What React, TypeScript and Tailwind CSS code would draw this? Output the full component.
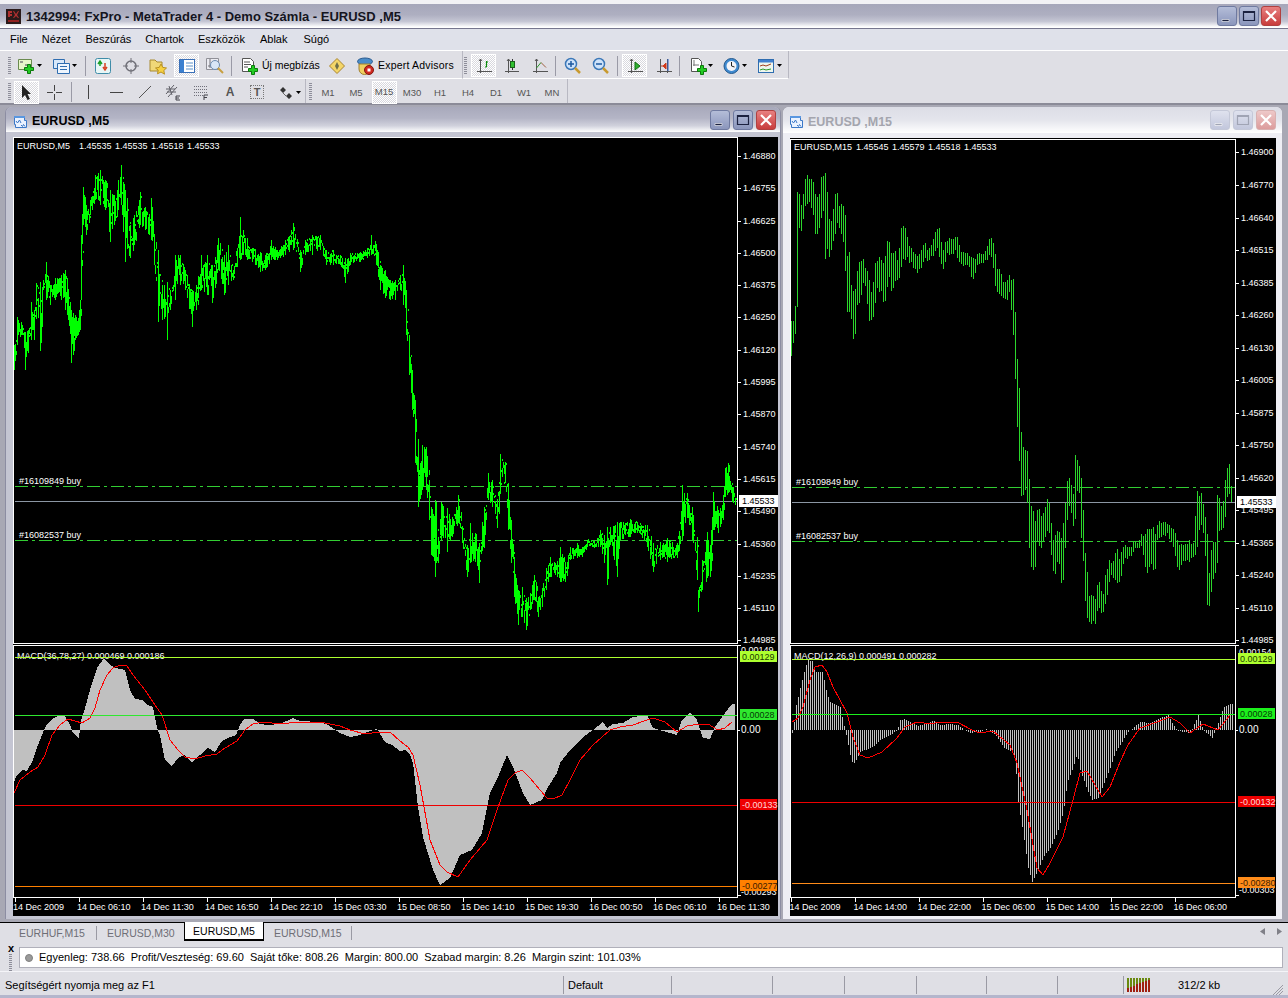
import type { ReactNode } from "react";

// [x, high y, low y] traced off the M5 chart, in page pixels
const ENV: number[][] = [
  [14,345,370],[17,317,345],[22,325,335],[25,332,370],[28,330,345],[31,302,340],[34,310,340],[36,283,305],[40,282,351],[46,262,300],[50,285,305],[55,278,300],[61,275,300],[65,270,310],[68,290,320],[71,310,363],[75,315,340],[78,318,335],[80,300,330],[81,235,300],[83,187,225],[86,205,235],[90,200,215],[95,175,200],[100,170,205],[105,180,210],[110,190,242],[114,195,225],[118,180,210],[121,165,205],[125,190,262],[130,225,258],[134,215,245],[140,192,225],[145,210,230],[151,198,240],[154,235,265],[158,250,322],[162,285,320],[167,282,340],[170,290,310],[175,255,300],[180,255,285],[185,270,290],[192,290,327],[196,285,310],[201,255,290],[207,255,295],[212,265,303],[218,238,270],[224,255,295],[228,245,285],[233,270,280],[240,217,260],[247,240,260],[255,250,265],[260,252,272],[265,255,270],[271,240,260],[277,250,260],[285,240,255],[293,223,250],[300,250,272],[305,240,255],[312,235,255],[320,235,250],[326,250,265],[333,250,265],[340,255,265],[345,258,283],[350,253,265],[360,252,262],[367,248,258],[371,235,255],[376,245,265],[380,265,290],[385,270,298],[390,280,300],[395,280,300],[400,275,290],[403,265,305],[406,290,335],[409,335,375],[412,370,410],[415,400,463],[418,455,507],[422,445,490],[426,447,490],[429,480,520],[431,507,555],[435,500,577],[438,537,563],[441,502,540],[447,508,552],[452,517,537],[458,495,523],[462,528,543],[467,545,577],[470,523,563],[475,533,562],[479,543,583],[484,507,540],[488,473,500],[492,480,507],[497,500,528],[500,454,493],[505,462,483],[508,483,530],[511,533,563],[514,557,597],[518,590,625],[522,587,617],[526,600,630],[530,593,610],[534,575,600],[538,597,617],[542,588,607],[546,568,590],[550,557,577],[555,563,575],[560,547,582],[565,562,582],[570,547,560],[577,543,558],[582,548,557],[587,540,547],[594,542,548],[600,530,547],[607,527,585],[610,527,545],[617,522,577],[620,522,540],[630,519,537],[637,522,533],[647,525,547],[653,543,572],[660,542,560],[667,538,562],[677,543,558],[682,485,540],[687,493,518],[692,508,540],[697,537,580],[698,590,612],[702,560,590],[707,532,578],[710,545,577],[713,492,530],[718,510,533],[723,495,520],[725,468,497],[728,463,493],[732,487,502],[735,498,505],
];

const HIST_L: number[][] = [
  [14,782],[17,775],[22,770],[27,771],[33,760],[38,745],[44,730],[47,724],[52,719],[58,716],[65,716],[70,725],[73,733],[79,738],[81,720],[84,712],[90,690],[97,668],[104,658],[110,665],[116,668],[125,670],[130,690],[135,699],[142,700],[147,705],[153,707],[157,728],[160,735],[165,760],[172,766],[178,758],[184,755],[192,762],[200,755],[208,748],[215,752],[222,741],[228,738],[236,735],[240,725],[244,719],[253,719],[260,724],[267,725],[280,724],[293,718],[300,721],[320,722],[328,725],[340,733],[350,737],[360,735],[373,730],[377,729],[385,742],[392,745],[400,751],[405,750],[410,755],[413,763],[418,807],[423,837],[433,870],[440,885],[450,878],[460,855],[472,850],[482,833],[490,793],[498,777],[507,755],[513,767],[523,793],[530,805],[542,800],[548,787],[557,773],[560,763],[570,750],[583,737],[593,730],[603,722],[607,728],[613,724],[623,723],[633,717],[647,715],[653,728],[663,731],[677,735],[682,720],[690,713],[697,720],[703,738],[710,739],[715,727],[725,713],[732,704],[735,704],
];

const SIG_L: number[][] = [
  [14,793],[20,780],[30,772],[38,767],[45,755],[52,735],[60,725],[68,719],[75,721],[82,723],[90,718],[95,708],[100,690],[107,675],[113,668],[120,665],[127,666],[133,675],[145,690],[155,705],[162,715],[170,740],[178,750],[185,757],[195,759],[205,756],[217,754],[225,748],[237,741],[245,730],[253,724],[263,722],[272,723],[283,724],[295,722],[310,722],[325,723],[340,726],[350,730],[365,734],[380,732],[390,732],[400,741],[408,747],[413,755],[420,785],[430,840],[440,865],[447,872],[458,877],[470,860],[487,840],[497,810],[508,780],[515,773],[522,770],[530,778],[540,790],[547,798],[553,799],[562,795],[570,780],[580,760],[593,745],[610,730],[620,727],[633,725],[647,720],[653,718],[665,722],[677,732],[687,726],[700,724],[708,724],[718,730],[725,728],[732,722],
];

const HIST_R: number[][] = [
  [791,735],[793,730],[796,705],[800,688],[805,668],[808,660],[812,661],[816,672],[822,672],[824,680],[827,695],[830,702],[835,705],[840,707],[843,722],[845,730],[846,735],[850,755],[853,765],[856,760],[860,752],[865,750],[870,748],[875,745],[880,740],[885,738],[890,735],[897,730],[900,720],[905,719],[910,722],[917,726],[925,724],[933,720],[940,725],[950,724],[958,725],[962,728],[966,731],[970,733],[975,732],[980,733],[985,729],[990,731],[995,735],[1000,742],[1005,749],[1012,752],[1015,760],[1018,803],[1023,833],[1028,868],[1032,882],[1037,872],[1043,857],[1050,848],[1057,833],[1063,813],[1067,783],[1073,767],[1077,753],[1080,770],[1087,790],[1092,800],[1098,798],[1105,780],[1110,768],[1115,753],[1120,745],[1127,733],[1140,722],[1150,723],[1160,718],[1168,715],[1173,725],[1178,731],[1190,733],[1198,715],[1203,730],[1212,738],[1218,723],[1223,708],[1230,704],
];

const SIG_R: number[][] = [
  [792,722],[798,718],[803,707],[810,680],[815,667],[822,665],[827,672],[833,687],[847,713],[853,737],[860,755],[868,758],[882,752],[897,738],[905,727],[917,722],[930,724],[940,722],[957,722],[972,730],[980,733],[993,731],[1010,745],[1017,763],[1027,810],[1037,868],[1043,875],[1050,863],[1063,837],[1073,800],[1080,773],[1087,771],[1095,785],[1102,797],[1110,787],[1120,762],[1128,745],[1140,728],[1157,722],[1170,717],[1180,723],[1190,733],[1203,724],[1218,730],[1230,715],
];

const rnd = (n: number) => {
  const s = Math.sin(n * 12.9898) * 43758.5453;
  return s - Math.floor(s);
};

const at = (pts: number[][], x: number, col: number) => {
  if (x <= pts[0][0]) return pts[0][col];
  for (let i = 1; i < pts.length; i++) {
    if (x <= pts[i][0]) {
      const [a, b] = [pts[i - 1], pts[i]];
      return a[col] + ((b[col] - a[col]) * (x - a[0])) / (b[0] - a[0]);
    }
  }
  return pts[pts.length - 1][col];
};

const line = (pts: number[][]) => pts.map((p) => `${p[0]},${p[1]}`).join(" ");

const buildLeftBars = (trim: number, seed: number) => {
  let d = "";
  for (let x = 14; x <= 735; x++) {
    const top = at(ENV, x, 1);
    const bot = at(ENV, x, 2);
    const h = bot - top;
    const exact = seed === 0 && ENV.some((p) => p[0] === x);
    const t = exact ? top : top + h * rnd(x + seed) * trim;
    const b = exact ? bot : bot - h * rnd(x + seed + 0.37) * trim;
    d += `M${x + 0.5} ${Math.round(Math.min(t, b - 2))}V${Math.round(b)}`;
  }
  return d;
};

const buildRightBars = () => {
  let d = "";
  for (let x = 791; x <= 1232; x += 2) {
    const xl = 167 + (x - 854) * 1.5;
    const top = Math.min(at(ENV, xl - 1.5, 1), at(ENV, xl + 1.5, 1));
    const bot = Math.max(at(ENV, xl - 1.5, 2), at(ENV, xl + 1.5, 2));
    const h = bot - top;
    const t = top + h * rnd(x) * 0.2;
    const b = bot - h * rnd(x + 0.37) * 0.2;
    d += `M${x + 0.5} ${Math.round(t) + 1}V${Math.round(b) + 1}`;
  }
  return d;
};

const buildRightHist = () => {
  let d = "";
  for (let x = 792; x <= 1232; x += 2) {
    d += `M${x + 0.5} 730V${Math.round(at(HIST_R, x, 1))}`;
  }
  return d;
};

const LEFT_PRICES: [string, number][] = [
  ["1.46880",156],["1.46755",188],["1.46625",221],["1.46500",253],["1.46375",285],["1.46250",317],["1.46120",350],["1.45995",382],["1.45870",414],["1.45740",447],["1.45615",479],["1.45490",511],["1.45360",544],["1.45235",576],["1.45110",608],["1.44985",640],
];
const RIGHT_PRICES: [string, number][] = [
  ["1.46900",152],["1.46770",185],["1.46640",218],["1.46515",250],["1.46385",283],["1.46260",315],["1.46130",348],["1.46005",380],["1.45875",413],["1.45750",445],["1.45620",478],["1.45495",510],["1.45365",543],["1.45240",575],["1.45110",608],["1.44985",640],
];
const LEFT_TIMES = ["14 Dec 2009","14 Dec 06:10","14 Dec 11:30","14 Dec 16:50","14 Dec 22:10","15 Dec 03:30","15 Dec 08:50","15 Dec 14:10","15 Dec 19:30","16 Dec 00:50","16 Dec 06:10","16 Dec 11:30"];
const RIGHT_TIMES = ["14 Dec 2009","14 Dec 14:00","14 Dec 22:00","15 Dec 06:00","15 Dec 14:00","15 Dec 22:00","16 Dec 06:00"];

interface Level {
  y: number;
  color: string;
  label: string;
  labelColor: string;
}

interface ChartProps {
  x0: number;
  y0: number;
  w: number;
  h: number;
  top: number;
  axis: number;
  headY: number;
  prices: [string, number][];
  times: string[];
  heading: string[];
  macd: string;
  bid: number;
  orders: number[];
  orderX: number;
  levels: Level[];
  edgeLabels: [string, number][];
  children: ReactNode;
}

const Chart = ({ x0, y0, w, h, top, axis, headY, prices, times, heading, macd, bid, orders, orderX, levels, edgeLabels, children }: ChartProps) => {
  const left = x0 + 0.5;
  const right = axis + 0.5;
  return (
    <svg
      width={w}
      height={h}
      viewBox={`${x0} ${y0} ${w} ${h}`}
      shapeRendering="crispEdges"
      className="block bg-black text-[9px] font-['Liberation_Sans',sans-serif]"
    >
      <path d={`M${left} ${top + 0.5}H${right}V643.5H${left}ZM${left} 645.5H${right}V897.5H${left}Z`} fill="none" stroke="#fff" />
      {prices.map(([p, y]) => (
        <g key={p}>
          <path d={`M${right} ${y + 0.5}h3`} stroke="#fff" />
          <text x={axis + 6} y={y + 3} fill="#fff">{p}</text>
        </g>
      ))}
      <text x={axis + 4} y={edgeLabels[0][1]} fill="#fff">{edgeLabels[0][0]}</text>
      <text x={axis + 4} y={edgeLabels[1][1]} fill="#fff">{edgeLabels[1][0]}</text>
      <text x={axis + 4} y={733} fill="#fff" className="text-[10px]">0.00</text>
      <path d={`M${right} 730.5h2M${right} 645.5h3M${right} 895.5h3`} stroke="#fff" />
      {times.map((t, i) => {
        const tx = x0 + (x0 === 13 ? 2 : 1.5) + 64 * i;
        return (
          <g key={t + i}>
            <path d={`M${Math.floor(tx) + 0.5} 897.5v4`} stroke="#fff" />
            <text x={tx - 2} y={910} fill="#fff">{t}</text>
          </g>
        );
      })}
      <text y={headY} fill="#fff">
        {heading.map((s, i) => (
          <tspan key={i} x={[x0 + 4, x0 + 66, x0 + 102, x0 + 138, x0 + 174][i]}>{s}</tspan>
        ))}
      </text>
      <path d={`M${left + 1} ${bid + 0.5}H${axis}`} stroke="#8b96a3" />
      {orders.map((y, i) => (
        <g key={y}>
          <path d={`M${left + 1} ${y + 0.5}H${axis}`} stroke="#32cd32" strokeDasharray="13 4 3 4" />
          <text x={orderX} y={y - 2} fill="#fff">{i === 0 ? "#16109849 buy" : "#16082537 buy"}</text>
        </g>
      ))}
      {children}
      <text x={x0 + 4} y={659} fill="#fff">{macd}</text>
      {levels.map((l) => (
        <path key={l.y} d={`M${left + 1} ${l.y + 0.5}H${axis}`} stroke={l.color} />
      ))}
      <rect x={axis + 2} y={bid - 6} width={39} height={12} fill="#fff" />
      <text x={axis + 5} y={bid + 3} fill="#000">1.45533</text>
      {levels.map((l) => (
        <g key={l.y}>
          <rect x={axis + 3} y={l.y - 6} width={37} height={11} fill={l.color} />
          <text x={axis + 5} y={l.y + 3} fill={l.labelColor}>{l.label}</text>
        </g>
      ))}
    </svg>
  );
};

const Ic = ({ w = 18, h = 18, children }: { w?: number; h?: number; children: ReactNode }) => (
  <svg width={w} height={h} viewBox={`0 0 ${w} ${h}`} className="block shrink-0">{children}</svg>
);

const Plus = ({ x, y }: { x: number; y: number }) => (
  <path transform={`translate(${x} ${y})`} d="M3.5.5h3v3h3v3h-3v3h-3v-3h-3v-3h3z" fill="#22cc22" stroke="#0c7a0c" strokeWidth="1" />
);

const Axes = ({ c = "#555" }: { c?: string }) => <path d="M4.5 1v14M1 13.5h15M3 3l1.500-2 1.500 2" fill="none" stroke={c} strokeWidth="1" />;

const Caret = () => (
  <svg width="5" height="3" viewBox="0 0 5 3" className="block shrink-0"><path d="M0 0h5L2.500 3z" fill="#000" /></svg>
);

const Sep = ({ ml }: { ml: string }) => <div className={`${ml} w-px h-[20px] bg-[#9a9aa6] shrink-0`} />;

const Grip = ({ ml }: { ml: string }) => (
  <div className={`${ml} w-[3px] h-[18px] shrink-0 bg-[repeating-linear-gradient(to_bottom,#8e8e9a_0_1px,transparent_1px_2px)]`} />
);

const Pressed = ({ ml, children }: { ml?: string; children?: ReactNode }) => (
  <div className={`${ml ?? ""} w-[25px] h-[23px] shrink-0 flex items-center justify-center border border-white bg-[repeating-conic-gradient(#ffffff_0_25%,#d8d8de_0_50%)] bg-[length:2px_2px]`}>
    {children}
  </div>
);

const WinBtn = ({ kind, active }: { kind: "min" | "max" | "close"; active: boolean }) => {
  const base = "w-[20px] h-[20px] rounded-[3px] flex items-center justify-center shrink-0 border";
  const tone =
    kind === "close"
      ? active
        ? "border-[#b04040] bg-[linear-gradient(to_bottom,#e88080,#c83c3c)]"
        : "border-[#d8b0b0] bg-[linear-gradient(to_bottom,#eec8c8,#dc9c9c)]"
      : active
        ? "border-[#6f7aa0] bg-[linear-gradient(to_bottom,#b4bdd8,#8b96bc)]"
        : "border-[#c4c8d8] bg-[linear-gradient(to_bottom,#dfe2ee,#c2c7dc)]";
  const ink = active ? "#1c2240" : "#a0a4b4";
  return (
    <div className={`${base} ${tone}`}>
      <svg width="16" height="16" viewBox="0 0 16 16">
        {kind === "min" && <path d="M3 11.500h7v2H3z" fill={ink} stroke="#fff" strokeWidth=".6" />}
        {kind === "max" && <path d="M2.500 3.500h11v9h-11zM2.500 4.500h11" fill="none" stroke={ink} strokeWidth="1.200" />}
        {kind === "close" && <path d="M3 3l10 10M13 3L3 13" stroke="#fff" strokeWidth="2.200" />}
      </svg>
    </div>
  );
};

const ChartGlyph = () => (
  <Ic w={15} h={15}>
    <path d="M1.500 2.500h10v4h2v7h-11v-3h-1z" fill="#eaf2ff" stroke="#3b78c8" />
    <path d="M1 2h11v2H1z" fill="#5a97e0" />
    <path d="M3 7l1.500 2 2-3 1.500 3M8 11l1.500 1.500 1-2 1.500 2" fill="none" stroke="#3b78c8" />
  </Ic>
);

const Lens = ({ minus }: { minus?: boolean }) => (
  <Ic w={17} h={18}>
    <circle cx="7" cy="7" r="5.500" fill="#cfe3fa" stroke="#3c78b8" strokeWidth="1.500" />
    <path d="M11 11l5 5" stroke="#c89a30" strokeWidth="2.500" />
    <path d={minus ? "M4 7h6" : "M4 7h6M7 4v6"} stroke="#1e5aa0" strokeWidth="1.500" />
  </Ic>
);

const TitleBar = () => (
  <div className="h-[25px] flex items-center pl-[6px] pr-[7px] shrink-0 border-b border-[#76768e] bg-[linear-gradient(to_bottom,#a6a7ba_0%,#aeafc1_45%,#c4c5d3_72%,#ffffff_96%)]">
    <svg width="15" height="15" viewBox="0 0 15 15" className="mt-px block shrink-0">
      <rect width="15" height="15" fill="#2a1a1a" />
      <path d="M2 2h4v2H4v1h2v2H4v1H2zM8 2l2 3 2-3h1l-2 4 2 3h-1l-2-2-2 2H7l2-3-2-4z" fill="#b03030" />
      <path d="M2 11h11v2H2z" fill="#902020" />
    </svg>
    <span className="ml-[5px] mt-px text-[13px] font-bold text-[#141420] whitespace-nowrap">
      1342994: FxPro - MetaTrader 4 - Demo Számla - EURUSD ,M5
    </span>
    <div className="ml-auto flex gap-[2px]">
      <WinBtn kind="min" active />
      <WinBtn kind="max" active />
      <WinBtn kind="close" active />
    </div>
  </div>
);

const MenuBar = () => (
  <div className="h-[22px] shrink-0 flex items-center bg-[#dfe1ea] border-b border-white text-[11px] text-black">
    {[
      ["File", "ml-[10px]"],
      ["Nézet", "ml-[14px]"],
      ["Beszúrás", "ml-[15px]"],
      ["Chartok", "ml-[14px]"],
      ["Eszközök", "ml-[14px]"],
      ["Ablak", "ml-[15px]"],
      ["Súgó", "ml-[16px]"],
    ].map(([t, ml]) => (
      <span key={t} className={ml}>{t}</span>
    ))}
  </div>
);

const ToolbarTop = () => (
  <div className="h-[28px] shrink-0 flex items-center bg-[#dfdfe5] text-[10.500px] text-black">
    <div className="w-[5px] h-full" />
    <div className="w-[458px] h-full pt-[2px] flex items-center border-r border-[#b8b8c2] border-b border-b-white">
      <Grip ml="ml-[3px]" />
      <div className="ml-[6px] shrink-0">
        <Ic><path d="M1.500 2.500h13v10h-13z" fill="#e8f6c8" stroke="#6a8a50" /><path d="M3 5h3M8 8h3" stroke="#445" /><Plus x={7} y={7} /></Ic>
      </div>
      <div className="ml-[2px]"><Caret /></div>
      <div className="ml-[10px] shrink-0">
        <Ic><path d="M1.500 2.500h11v9h-11z" fill="#d8e8fa" stroke="#2f6db0" /><path d="M5.500 6.500h12v10h-12z" fill="#eef5fd" stroke="#2f6db0" /><path d="M8 9.500h7M8 12.500h7" stroke="#2f6db0" /></Ic>
      </div>
      <div className="ml-[2px]"><Caret /></div>
      <Sep ml="ml-[8px]" />
      <div className="ml-[9px] shrink-0">
        <Ic w={16} h={16}><rect x=".5" y=".5" width="15" height="15" rx="2" fill="#e8f6f6" stroke="#3f8ca8" /><path d="M5 8V4M3 6l2-3 2 3" fill="none" stroke="#1aa028" strokeWidth="1.500" /><path d="M10 5v5M8 9l2 3 2-3" fill="none" stroke="#d84020" strokeWidth="1.500" /></Ic>
      </div>
      <div className="ml-[12px] shrink-0">
        <Ic w={16} h={16}><circle cx="8" cy="8" r="5" fill="none" stroke="#707078" strokeWidth="1.500" /><path d="M8 0v5M8 11v5M0 8h5M11 8h5" stroke="#707078" /></Ic>
      </div>
      <div className="ml-[10px] shrink-0">
        <Ic><path d="M1 3h5l2 2h5v9H1z" fill="#f0d878" stroke="#a88a30" /><path d="M12 7l1.800 3.400 3.700.6-2.700 2.500.7 3.700L12 15l-3.500 1.800.7-3.700L6.500 11l3.700-.6z" fill="#f6d040" stroke="#b89020" /></Ic>
      </div>
      <Pressed ml="ml-[7px]">
        <Ic w={16} h={16}><rect x=".5" y="1.500" width="15" height="13" fill="#fff" stroke="#3a70b8" /><rect x="1" y="2" width="4" height="12" fill="#3a80d0" /><path d="M7 5h7M7 8h7M7 11h7" stroke="#5a90c8" /></Ic>
      </Pressed>
      <div className="ml-[7px] shrink-0">
        <Ic><path d="M.5 1.500h12v11H.5z" fill="#ececf2" stroke="#909098" /><path d="M4 2v9M2 9h9" stroke="#707078" /><circle cx="9" cy="8" r="4.500" fill="#d8e6f6" stroke="#6c8cb0" /><path d="M12 11l5 5" stroke="#c8a040" strokeWidth="2" /></Ic>
      </div>
      <Sep ml="ml-[7px]" />
      <div className="ml-[9px] shrink-0">
        <Ic w={17} h={18}><path d="M1.500 1.500h8l3 3v10h-11z" fill="#fff" stroke="#555" /><path d="M3 5h6M3 7.500h7M3 10h4" stroke="#555" /><Plus x={7} y={8} /></Ic>
      </div>
      <span className="ml-[4px] w-[58px] shrink-0 whitespace-nowrap tracking-[-0.05px]">Új megbízás</span>
      <div className="ml-[9px] shrink-0">
        <Ic w={16} h={16}><path d="M8 .5L15.500 8 8 15.500.5 8z" fill="#f4d668" stroke="#a88430" /><path d="M6 8l2-4 2 4-2 4z" fill="#707048" /></Ic>
      </div>
      <div className="ml-[11px] shrink-0">
        <Ic><ellipse cx="9" cy="4.500" rx="7.500" ry="3.500" fill="#4a8cc8" stroke="#2a5a90" /><path d="M3 7h11v5a5 5 0 01-11 0z" fill="#f0d060" stroke="#a08030" /><circle cx="13" cy="13" r="4.500" fill="#d02820" stroke="#801810" /><rect x="11.500" y="11.500" width="3" height="3" fill="#fff" /></Ic>
      </div>
      <span className="ml-[4px] w-[77px] shrink-0 whitespace-nowrap tracking-[0.2px]">Expert Advisors</span>
    </div>
    <div className="w-[326px] h-full pt-[2px] flex items-center border-r border-[#b8b8c2] border-b border-b-white">
      <Grip ml="ml-px" />
      <Pressed ml="ml-[4px]">
        <Ic w={16} h={16}><Axes /><path d="M10.500 3v6M9 9h1.500M10.500 4H12" fill="none" stroke="#0a8a0a" strokeWidth="1.200" /></Ic>
      </Pressed>
      <div className="ml-[8px] shrink-0">
        <Ic w={15} h={16}><Axes /><path d="M8.500 1v11" stroke="#333" /><rect x="6.500" y="3.500" width="4" height="6" fill="#30c030" stroke="#1a601a" /></Ic>
      </div>
      <div className="ml-[13px] shrink-0">
        <Ic w={16} h={16}><Axes /><path d="M4.500 10L9 4.500" fill="none" stroke="#2a9a2a" /><path d="M9 4.500l5 5" fill="none" stroke="#a06040" /></Ic>
      </div>
      <Sep ml="ml-[7px]" />
      <div className="ml-[8px] shrink-0"><Lens /></div>
      <div className="ml-[11px] shrink-0"><Lens minus /></div>
      <Sep ml="ml-[8px]" />
      <Pressed ml="ml-[4px]">
        <Ic w={16} h={16}><Axes /><path d="M8 4l5 4-5 4z" fill="#30b030" stroke="#107010" /></Ic>
      </Pressed>
      <div className="ml-[9px] shrink-0">
        <Ic w={16} h={16}><path d="M4.500 1v14M1 13.500h15M11.500 1v14" fill="none" stroke="#555" /><path d="M5 8h5M10 5v6l-3-3z" fill="#d03818" stroke="#d03818" /><path d="M12 1v12" stroke="#3060c0" /></Ic>
      </div>
      <Sep ml="ml-[7px]" />
      <div className="ml-[10px] shrink-0">
        <Ic w={17} h={18}><path d="M1.500 1.500h7l3 3v10h-10z" fill="#fff" stroke="#555" /><path d="M4 3v6M3 8h6" stroke="#777" /><Plus x={7} y={8} /></Ic>
      </div>
      <div className="ml-px"><Caret /></div>
      <div className="ml-[10px] shrink-0">
        <Ic w={17} h={18}><circle cx="8.500" cy="9" r="7.500" fill="#3f8ad0" stroke="#24588c" /><circle cx="8.500" cy="9" r="5" fill="#f4f4f8" /><path d="M8.500 5v4l3 1" fill="none" stroke="#222" /></Ic>
      </div>
      <div className="ml-[2px]"><Caret /></div>
      <div className="ml-[11px] shrink-0">
        <Ic w={16} h={16}><rect x=".5" y="1.500" width="15" height="13" fill="#eef6ee" stroke="#2f6db0" /><rect x="1" y="2" width="14" height="2.500" fill="#3f80d0" /><path d="M2 8l3-1 3 1 5-2" fill="none" stroke="#a04020" /><path d="M2 12l3-1 3 1 5-1" fill="none" stroke="#2a9a2a" /></Ic>
      </div>
      <div className="ml-[3px]"><Caret /></div>
    </div>
    <div className="flex-1 h-full" />
  </div>
);

const TIMEFRAMES = ["M1", "M5", "M15", "M30", "H1", "H4", "D1", "W1", "MN"];

const ToolbarBottom = () => (
  <div className="h-[26px] shrink-0 flex items-center bg-[#dfdfe5] border-b-2 border-[#8b8b98]">
    <div className="w-[5px] h-full" />
    <div className="w-[301px] h-full pt-[2px] flex items-center border-r border-[#b8b8c2]">
      <Grip ml="ml-[3px]" />
      <Pressed ml="ml-[3px]">
        <Ic w={11} h={16}><path d="M1 1v13l3-3 2.500 5 2.500-1-2.500-5H10z" fill="#222" /></Ic>
      </Pressed>
      <div className="ml-[8px] shrink-0">
        <Ic w={15} h={15}><path d="M7.500 0v6M7.500 9v6M0 7.500h6M9 7.500h6" stroke="#444" /></Ic>
      </div>
      <Sep ml="ml-[9px]" />
      <div className="ml-[15px] w-[3px] h-[14px] flex justify-center shrink-0"><div className="w-px h-full bg-[#444]" /></div>
      <div className="ml-[20px] w-[13px] h-px bg-[#444] shrink-0" />
      <div className="ml-[15px] shrink-0">
        <Ic w={14} h={14}><path d="M1 13L13 1" stroke="#555" /></Ic>
      </div>
      <div className="ml-[13px] w-[16px] shrink-0">
        <Ic w={16} h={18}><path d="M1 11L9 2M3 14L12 4M1 6h9M2 9h9M4 3l3 9" fill="none" stroke="#606068" /><path d="M11 13h4M11 13v4h4M11 15h3" fill="none" stroke="#404048" /></Ic>
      </div>
      <div className="ml-[12px] w-[16px] shrink-0">
        <Ic w={16} h={18}><path d="M1 3.500h13M1 6.500h13M1 9.500h13M1 12.500h9" stroke="#70707a" strokeDasharray="1 1" /><path d="M11 12v5M11 12h4M11 14.500h3" fill="none" stroke="#404048" /></Ic>
      </div>
      <span className="ml-[15px] w-[12px] shrink-0 text-center text-[12px] font-bold text-[#555]">A</span>
      <div className="ml-[14px] w-[14px] h-[14px] shrink-0 flex items-center justify-center border border-dotted border-[#777] text-[11px] font-bold text-[#555]">T</div>
      <div className="ml-[14px] shrink-0">
        <Ic w={15} h={15}><path d="M2 5l3-3 3 3-3 3zM8 11l3-3 3 3-3 3z" fill="#333" /><path d="M5 8l3 3" stroke="#666" /></Ic>
      </div>
      <div className="ml-[3px]"><Caret /></div>
    </div>
    <div className="w-[262px] h-full pt-[2px] flex items-center border-r border-[#b8b8c2] text-[9.500px] text-[#555]">
      <Grip ml="ml-[3px]" />
      <div className="ml-[2px] flex">
        {TIMEFRAMES.map((t) =>
          t === "M15" ? (
            <div key={t} className="w-[28px] flex justify-center">
              <Pressed>{t}</Pressed>
            </div>
          ) : (
            <span key={t} className="w-[28px] text-center leading-[23px]">{t}</span>
          ),
        )}
      </div>
    </div>
    <div className="flex-1 h-full" />
  </div>
);

const ChildTitle = ({ label, active }: { label: string; active: boolean }) => (
  <div
    className={
      active
        ? "h-[25px] shrink-0 flex items-center pl-[7px] pr-[4px] rounded-t-[6px] bg-[linear-gradient(to_bottom,#a8a9bb_0%,#b4b5c6_45%,#d0d1dc_75%,#ffffff_100%)]"
        : "h-[26px] shrink-0 flex items-center pl-[6px] pr-[6px] rounded-t-[6px] bg-[linear-gradient(to_bottom,#dcdde6_0%,#e4e5ec_50%,#ffffff_100%)]"
    }
  >
    <div className="mt-[3px]"><ChartGlyph /></div>
    <span className={active ? "ml-[4px] mt-[4px] text-[12.500px] font-bold text-black" : "ml-[4px] mt-[4px] text-[12.500px] font-bold text-[#a4a5ae]"}>{label}</span>
    <div className="ml-auto flex gap-[3px]">
      <WinBtn kind="min" active={active} />
      <WinBtn kind="max" active={active} />
      <WinBtn kind="close" active={active} />
    </div>
  </div>
);

const LeftChart = () => (
  <Chart
    x0={13} y0={137} w={765} h={779} top={137} axis={737} headY={149}
    prices={LEFT_PRICES} times={LEFT_TIMES}
    heading={["EURUSD,M5", "1.45535", "1.45535", "1.45518", "1.45533"]}
    macd="MACD(36,78,27) 0.000469 0.000186"
    bid={501} orders={[486, 540]} orderX={19}
    edgeLabels={[["0.00149", 653], ["-0.00293", 895]]}
    levels={[
      { y: 657, color: "#adff2f", label: "0.00129", labelColor: "#1a3a00" },
      { y: 715, color: "#2fe82f", label: "0.00028", labelColor: "#063a06" },
      { y: 805, color: "#ee0000", label: "-0.00133", labelColor: "#ffd8d8" },
      { y: 886, color: "#ff8000", label: "-0.00277", labelColor: "#3a1c00" },
    ]}
  >
    <path d={buildLeftBars(0.72, 0)} fill="none" stroke="#00ff00" strokeWidth="1" />
    <path d={buildLeftBars(0.88, 7)} fill="none" stroke="#00ff00" strokeWidth="1" transform="translate(1 0)" />
    <polygon points={`14,730 ${line(HIST_L)} 735,730`} fill="#c0c0c0" />
    <polyline points={line(SIG_L)} fill="none" stroke="#ff0000" />
  </Chart>
);

const RightChart = () => (
  <Chart
    x0={790} y0={138} w={486} h={778} top={139} axis={1235} headY={150}
    prices={RIGHT_PRICES} times={RIGHT_TIMES}
    heading={["EURUSD,M15", "1.45545", "1.45579", "1.45518", "1.45533"]}
    macd="MACD(12,26,9) 0.000491 0.000282"
    bid={502} orders={[487, 541]} orderX={796}
    edgeLabels={[["0.00154", 655], ["-0.00303", 893]]}
    levels={[
      { y: 659, color: "#adff2f", label: "0.00129", labelColor: "#1a3a00" },
      { y: 714, color: "#1cf01c", label: "0.00028", labelColor: "#063a06" },
      { y: 802, color: "#ee0000", label: "-0.00132", labelColor: "#ffd8d8" },
      { y: 883, color: "#ff8c1a", label: "-0.00280", labelColor: "#3a1c00" },
    ]}
  >
    <path d={buildRightBars()} fill="none" stroke="#2bd62b" />
    <path d={buildRightHist()} fill="none" stroke="#c0c0c0" />
    <polyline points={line(SIG_R)} fill="none" stroke="#ff0000" />
  </Chart>
);

const TabBar = () => (
  <div className="h-[21px] shrink-0 flex bg-[#dfdfe5] border-t border-black text-[10.500px] text-[#6e6e76]">
    <div className="w-[14px]" />
    <span className="w-[69px] leading-[20px] pl-[5px] whitespace-nowrap">EURHUF,M15</span>
    <div className="ml-[13px] mt-[3px] w-px h-[14px] bg-[#9a9aa4]" />
    <span className="ml-[10px] w-[66px] leading-[20px] whitespace-nowrap">EURUSD,M30</span>
    <div className="ml-[11px] w-[80px] h-[19px] -mt-px bg-white border border-black border-t-0 border-b-2 text-black text-center leading-[19px] whitespace-nowrap">EURUSD,M5</div>
    <span className="ml-[10px] w-[66px] leading-[20px] whitespace-nowrap">EURUSD,M15</span>
    <div className="ml-[11px] mt-[3px] w-px h-[14px] bg-[#9a9aa4]" />
    <div className="ml-auto mr-[6px] mt-[5px] flex gap-[12px]">
      <svg width="5" height="7" viewBox="0 0 5 7"><path d="M5 0v7L0 3.500z" fill="#808088" /></svg>
      <svg width="5" height="7" viewBox="0 0 5 7"><path d="M0 0v7l5-3.500z" fill="#808088" /></svg>
    </div>
  </div>
);

const AccountBar = () => (
  <div className="h-[28px] shrink-0 flex items-center bg-[#dfdfe5]">
    <div className="ml-[8px] w-[10px] flex flex-col items-start shrink-0">
      <span className="text-[11px] leading-[11px] font-bold text-black">x</span>
      <Grip ml="ml-px" />
    </div>
    <div className="ml-px flex-1 mr-[5px] mt-px h-[21px] flex items-center bg-white border border-[#b0b0ba]">
      <span className="ml-[5px] w-[8px] h-[8px] rounded-full bg-[#9a9a9a] border border-[#808080] shrink-0" />
      <span className="ml-[6px] text-[11px] text-black whitespace-pre">Egyenleg: 738.66  Profit/Veszteség: 69.60  Saját tőke: 808.26  Margin: 800.00  Szabad margin: 8.26  Margin szint: 101.03%</span>
    </div>
  </div>
);

const SEP_GAPS = ["ml-[103px]", "ml-[100px]", "ml-[71px]", "ml-[71px]", "ml-[69px]", "ml-[70px]", "ml-[65px]"];

const StatusBar = () => (
  <div className="h-[27px] shrink-0 bg-[#dfdfe5] border-t border-[#f4f4f8] flex flex-col">
    <div className="flex-1 pt-[3px] flex items-center text-[11px] text-black">
      <span className="ml-[5px] w-[558px] whitespace-nowrap">Segítségért nyomja meg az F1</span>
      <div className="w-px h-[18px] bg-[#9a9aa4]" />
      <span className="ml-[4px] w-[0px] whitespace-nowrap">Default</span>
      {SEP_GAPS.map((ml, i) => (
        <div key={i} className={`${ml} w-px h-[18px] bg-[#9a9aa4] shrink-0`} />
      ))}
      <svg width="25" height="14" viewBox="0 0 25 14" shapeRendering="crispEdges" className="ml-[3px] block shrink-0">
        {[0, 1, 2, 3, 4, 5, 6, 7].map((i) => (
          <g key={i}>
            <rect x={i * 3} y={0} width={2} height={14} fill="#6a8a10" />
            <rect x={i * 3} y={10 - i * 1.2} width={2} height={4 + i * 1.2} fill="#a02010" />
          </g>
        ))}
      </svg>
      <span className="ml-[26px] whitespace-nowrap">312/2 kb</span>
      <svg width="11" height="11" viewBox="0 0 11 11" className="ml-auto mr-[5px] self-end block shrink-0">
        <path d="M11 1L1 11M11 4L4 11M11 7L7 11" stroke="#9a9aa4" />
      </svg>
    </div>
    <div className="h-[3px] shrink-0 bg-[#b4b6cc]" />
  </div>
);

export default function App() {
  return (
    <div className="w-[1288px] h-[998px] overflow-hidden flex flex-col bg-[#dfdfe5] font-['Liberation_Sans',sans-serif]">
      <div className="h-[4px] shrink-0 bg-[#f2f2f5]" />
      <TitleBar />
      <MenuBar />
      <ToolbarTop />
      <ToolbarBottom />
      <div className="h-[817px] shrink-0 flex items-start pt-[2px] pl-[5px] pr-[6px] gap-[2px] bg-[#a8a8b4]">
        <div className="w-[776px] h-[812px] shrink-0 flex flex-col rounded-t-[6px] bg-[#c4c5d2] border-x border-[#8c8da2]">
          <ChildTitle label="EURUSD ,M5" active />
          <div className="pl-[7px] pt-[5px]">
            <LeftChart />
          </div>
        </div>
        <div className="w-[499px] h-[812px] shrink-0 flex flex-col rounded-t-[6px] bg-[#eeeef4]">
          <ChildTitle label="EURUSD ,M15" active={false} />
          <div className="pl-[7px] pt-[5px]">
            <RightChart />
          </div>
        </div>
      </div>
      <TabBar />
      <AccountBar />
      <StatusBar />
    </div>
  );
}
